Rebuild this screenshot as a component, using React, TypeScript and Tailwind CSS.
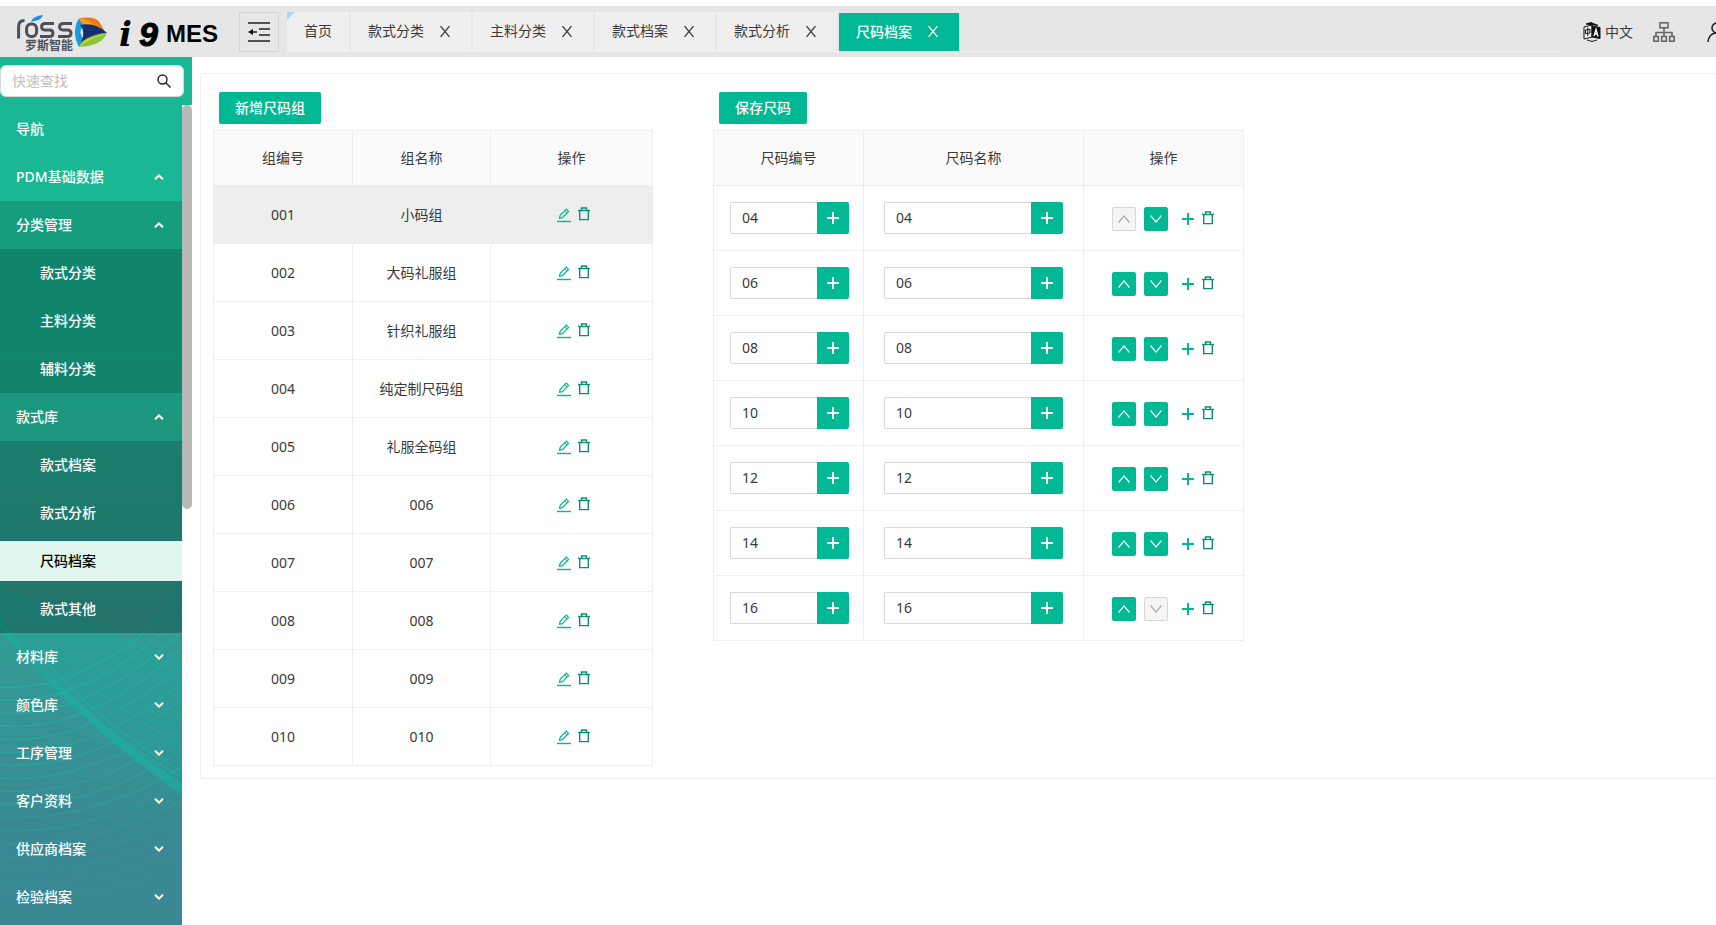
import React from 'react';

interface SubMenu {
  title: string;
  children: string[];
}

const tabs = ['款式分类', '主料分类', '款式档案', '款式分析', '尺码档案'];
const activePage = '尺码档案';

const subMenus: SubMenu[] = [
  { title: '分类管理', children: ['款式分类', '主料分类', '辅料分类'] },
  { title: '款式库', children: ['款式档案', '款式分析', '尺码档案', '款式其他'] },
];

const closedMenus = ['材料库', '颜色库', '工序管理', '客户资料', '供应商档案', '检验档案'];

const groups = [
  { code: '001', name: '小码组' },
  { code: '002', name: '大码礼服组' },
  { code: '003', name: '针织礼服组' },
  { code: '004', name: '纯定制尺码组' },
  { code: '005', name: '礼服全码组' },
  { code: '006', name: '006' },
  { code: '007', name: '007' },
  { code: '008', name: '008' },
  { code: '009', name: '009' },
  { code: '010', name: '010' },
];

const sizes = ['04', '06', '08', '10', '12', '14', '16'];

const curves = Array.from({ length: 17 }, (_, i) => i);

const EditIcon = () => (
  <svg width="14" height="16" viewBox="0 0 14 16" fill="none" stroke="#00b894">
    <path d="M2.5 11.2 3.2 8.4 9.3 2.2 11.6 4.5 5.4 10.6Z" strokeWidth="1.2" />
    <path d="M7.8 3.7 10.1 6" />
    <path d="M0 14.500H14" strokeWidth="1.4" />
  </svg>
);

const TrashIcon = () => (
  <svg width="12" height="16" viewBox="0 0 12 16" fill="none" stroke="#0b8f73" strokeWidth="1.4">
    <path d="M0 3.5H12" />
    <path d="M3.5 3.2V1H8.5V3.2" />
    <path d="M1.7 3.5V12.6H10.3V3.5" />
  </svg>
);

const PlusIcon = ({ size = 12 }: { size?: number }) => (
  <svg width={size} height={size} viewBox="0 0 12 12" fill="none" stroke="currentColor" strokeWidth="2">
    <path d="M6 0V12M0 6H12" />
  </svg>
);

const Arrow = ({ up }: { up?: boolean }) => (
  <svg width="12" height="8" viewBox="0 0 12 8" fill="none" stroke="currentColor" strokeWidth="1.2">
    <path d={up ? 'M.6 7.5 6 .9 11.4 7.5' : 'M.6 .5 6 7.1 11.4 .5'} />
  </svg>
);

const Chevron = ({ open }: { open?: boolean }) => (
  <svg width="10" height="6" viewBox="0 0 10 6" fill="none" stroke="white" strokeWidth="2">
    <path d={open ? 'M1 5.2 5 1.4 9 5.2' : 'M1 .8 5 4.6 9 .8'} />
  </svg>
);

const Logo = () => (
  <svg width="212" height="50" viewBox="0 -5 212 50" className="overflow-visible" role="img" aria-label="ROSS i9 MES">
    <g fill="none" stroke="#4d4f59" strokeWidth="3">
      <path d="M2.600 26.500V14.500Q2.600 8.500 8.500 8.500" />
      <rect x="10.600" y="12" width="10" height="12.500" rx="4.500" />
      <path d="M38 11.500H29.500Q25.600 11.500 25.600 14.800T29 18H33.500Q37 18 37 21.300T33.500 24.600H24" />
      <path d="M56 11.500H47.500Q43.600 11.500 43.600 14.800T47 18H51.500Q55 18 55 21.300T51.500 24.600H42" />
    </g>
    <path d="M15 9.500Q17 4 27 3Q26 8.500 15 9.500Z" fill="#1f8fe0" />
    <text x="9" y="38" fontSize="12" fontWeight="700" fill="#4d4f59">罗斯智能</text>
    <path d="M64 6Q80 4 84 11L88 18Q77 10 66 13Q64 10 64 6Z" fill="#f07818" />
    <path d="M64 6Q72 8 88 18Q77 13 66 13Z" fill="#f9a01b" />
    <path d="M63 6Q55 20 63 35Q66 33 68 28Q61 19 68 13Q64 10 63 6Z" fill="#1a9be0" />
    <path d="M64 13Q80 10 91 21Q79 22 65 30Q70 20 64 13Z" fill="#14306e" />
    <path d="M63 35Q66 28 74 25Q83 21 91 21Q86 34 63 35Z" fill="#8cc63f" />
    <path d="M63 35Q70 28 91 21Q83 23 72 27Q66 30 63 35Z" fill="#e4d829" />
    <text x="103" y="34" fontSize="34" fontWeight="700" fontStyle="italic" fontFamily="DejaVu Serif, serif">i</text>
    <text x="123" y="34" fontSize="34" fontWeight="700" fontStyle="italic" fontFamily="Liberation Sans, sans-serif" stroke="#000">9</text>
    <text x="150" y="30" fontSize="24" fontWeight="700" fontFamily="Liberation Sans, sans-serif">MES</text>
  </svg>
);

const Header = () => (
  <header className="mt-1.5 flex h-[51px] items-center bg-[#e6e6e6]">
    <div className="w-[239px] shrink-0 pl-4">
      <Logo />
    </div>
    <button aria-label="收起菜单" className="flex h-10 w-10 shrink-0 items-center justify-center border border-[#d4d4d4]">
      <svg width="22" height="20" viewBox="0 0 22 20" fill="none" stroke="#222" strokeWidth="1.500">
        <path d="M0 1H22M11 7H22M11 13H22M0 19H22" />
        <path d="M0 10 5 7V13Z" fill="#111" stroke="none" />
        <path d="M4 10H9" />
      </svg>
    </button>
    <nav className="ml-2 flex h-10 flex-1 gap-0.5 border-b border-[#f0f0f0]">
      <a href="#home" className="relative flex items-center bg-[#efefef] px-[17px]">
        <span className="absolute top-0 left-0 border-t-8 border-r-8 border-t-[#add8e6] border-r-transparent" />
        首页
      </a>
      {tabs.map((tab) => (
        <div
          key={tab}
          className={`flex items-center gap-4 pr-[21px] pl-[17px] ${
            tab === activePage ? 'mt-px bg-[#00b894] font-medium text-white' : 'bg-[#efefef]'
          }`}
        >
          <a href={`#${tab}`}>{tab}</a>
          <button aria-label={`关闭${tab}`}>
            <svg width="10" height="11" viewBox="0 0 10 11" fill="none" stroke="currentColor" strokeWidth="1.2">
              <path d="M.5 0 9.500 11M9.500 0 .5 11" />
            </svg>
          </button>
        </div>
      ))}
    </nav>
    <div className="ml-5 flex w-[133px] shrink-0 items-center overflow-hidden">
      <button className="flex shrink-0 items-center gap-1 whitespace-nowrap">
        <svg width="18" height="20" viewBox="0 0 18 20" fill="none" stroke="#111">
          <path d="M1 5 9 3V15L1 17Z" fill="#f4f4f4" />
          <path d="M9 4 17 5.500V16.500L9 15Z" fill="#111" />
          <path d="M3 2 8 .6 15 3.500Z" fill="#111" />
          <path d="M2.500 8 7 7.200V11L2.500 11.600ZM4.800 5.500V14" />
          <path d="M11 14 13 7.500 15 14.500M11.500 12H14.500" stroke="white" strokeWidth="1.400" />
          <path d="M4 18Q9 21 14 18" />
        </svg>
        中文
      </button>
      <button aria-label="组织架构" className="ml-5 shrink-0">
        <svg width="22" height="20" viewBox="0 0 22 20" fill="none" stroke="#666" strokeWidth="1.600">
          <rect x="7" y=".8" width="8" height="5" />
          <rect x=".8" y="14.500" width="4.600" height="4.700" />
          <rect x="8.700" y="14.500" width="4.600" height="4.700" />
          <rect x="16.600" y="14.500" width="4.600" height="4.700" />
          <path d="M11 6V14.500M3 14.500V10.500H19V14.500" />
        </svg>
      </button>
      <button aria-label="用户" className="ml-8 shrink-0">
        <svg width="20" height="20" viewBox="0 0 20 20" fill="none" stroke="#222" strokeWidth="1.600">
          <circle cx="10" cy="6" r="5" />
          <path d="M1 20Q2 11 10 11T19 20" />
        </svg>
      </button>
    </div>
  </header>
);

const Waves = () => (
  <svg className="absolute bottom-0 left-0 h-[400px] w-full" viewBox="0 0 182 400" preserveAspectRatio="none" fill="none" aria-hidden="true">
    <g stroke="#20b8ac" strokeWidth="1.500">
      {curves.map((i) => (
        <path key={i} strokeOpacity={0.6 - i * 0.03} d={`M0 ${162 + i * 13}Q90 ${168 + i * 13} 182 ${72 + i * 17}`} />
      ))}
    </g>
    <path d="M0 60Q70 95 182 132V262Q70 200 0 105Z" fill="#12b3a4" fillOpacity="0.22" />
    <path d="M0 92Q60 185 182 270V258Q80 190 0 104Z" fill="#14b8a8" fillOpacity="0.5" />
    <path d="M40 130Q100 200 182 246M30 130Q100 208 182 252" stroke="#20c0b2" strokeOpacity="0.5" />
  </svg>
);

const Sidebar = () => (
  <aside className="w-48 shrink-0 text-white">
    <div className="h-12 bg-[#19b793] pt-2 pr-2">
      <div className="flex h-8 items-center rounded-md border border-[#d9d9d9] bg-white pr-3 pl-[11px]">
        <input
          aria-label="快速查找"
          placeholder="快速查找"
          className="min-w-0 flex-1 text-[#333] outline-none placeholder:text-[#bfbfbf]"
        />
        <button aria-label="查找">
          <svg width="14" height="14" viewBox="0 0 14 14" fill="none" stroke="#222" strokeWidth="1.400">
            <circle cx="5.500" cy="5.500" r="4.500" />
            <path d="M8.800 8.800 13.500 13.500" />
          </svg>
        </button>
      </div>
    </div>
    <div className="flex">
      <nav className="relative flex-1 overflow-hidden bg-linear-to-b from-[#19b793] from-30% to-[#3a8893] to-90% pb-1 font-medium">
        <Waves />
        <div className="relative">
          <div className="flex h-12 items-center px-4">导航</div>
          <button className="flex h-12 w-full items-center justify-between pr-[18px] pl-4">
            PDM基础数据
            <Chevron open />
          </button>
          {subMenus.map((menu) => (
            <div key={menu.title} className="bg-black/14">
              <button className="flex h-12 w-full items-center justify-between pr-[18px] pl-4">
                {menu.title}
                <Chevron open />
              </button>
              <div className="bg-black/15">
                {menu.children.map((child) => (
                  <div key={child} className="flex h-12 items-center">
                    <a
                      href={`#${child}`}
                      className={`flex h-10 flex-1 items-center pl-10 ${
                        child === activePage ? 'bg-[#e0f6ee] text-black' : ''
                      }`}
                    >
                      {child}
                    </a>
                  </div>
                ))}
              </div>
            </div>
          ))}
          {closedMenus.map((label) => (
            <button key={label} className="flex h-12 w-full items-center justify-between pr-[18px] pl-4">
              {label}
              <Chevron />
            </button>
          ))}
        </div>
      </nav>
      <div className="w-2.5">
        <div className="h-[404px] rounded-full bg-[#b8b8b8]" />
      </div>
    </div>
  </aside>
);

const GroupTable = () => (
  <section>
    <button className="ml-1.5 h-8 rounded-xs bg-[#00b894] px-4 font-medium text-white">新增尺码组</button>
    <table className="mt-1.5 w-[440px] table-fixed border-collapse text-center">
      <colgroup>
        <col className="w-[139px]" />
        <col className="w-[138px]" />
        <col />
      </colgroup>
      <thead>
        <tr className="h-[55px] bg-[#fafafa]">
          <th className="border border-[#eee] font-normal">组编号</th>
          <th className="border border-[#eee] font-normal">组名称</th>
          <th className="border border-[#eee] font-normal">操作</th>
        </tr>
      </thead>
      <tbody>
        {groups.map((group, i) => (
          <tr key={group.code} className={`h-[58px] ${i === 0 ? 'bg-[#eee]' : ''}`}>
            <td className="border border-[#eee]">{group.code}</td>
            <td className="border border-[#eee]">{group.name}</td>
            <td className="border border-[#eee] pl-1">
              <div className="flex items-center justify-center gap-[7px]">
                <button aria-label="编辑">
                  <EditIcon />
                </button>
                <button aria-label="删除">
                  <TrashIcon />
                </button>
              </div>
            </td>
          </tr>
        ))}
      </tbody>
    </table>
  </section>
);

const SizeField = ({ label, value }: { label: string; value: string }) => (
  <div className="flex h-8">
    <input
      aria-label={label}
      defaultValue={value}
      className="min-w-0 flex-1 rounded-l-xs border border-r-0 border-[#d9d9d9] px-[11px] outline-none"
    />
    <button aria-label={`添加${label}`} className="flex w-8 items-center justify-center rounded-r-xs bg-[#00b894] text-white">
      <PlusIcon />
    </button>
  </div>
);

const MoveButton = ({ up, disabled }: { up?: boolean; disabled?: boolean }) => (
  <button
    aria-label={up ? '上移' : '下移'}
    disabled={disabled}
    className={`flex h-6 w-6 items-center justify-center rounded-xs border ${
      disabled ? 'border-[#d9d9d9] bg-[#f5f5f5] text-[#aaa]' : 'border-[#00b894] bg-[#00b894] text-white'
    }`}
  >
    <Arrow up={up} />
  </button>
);

const SizeTable = () => (
  <section>
    <button className="ml-1.5 h-8 rounded-xs bg-[#00b894] px-4 font-medium text-white">保存尺码</button>
    <table className="mt-1.5 w-[531px] table-fixed border-collapse text-center">
      <colgroup>
        <col className="w-[150px]" />
        <col className="w-[220px]" />
        <col />
      </colgroup>
      <thead>
        <tr className="h-[55px] bg-[#fafafa]">
          <th className="border border-[#eee] font-normal">尺码编号</th>
          <th className="border border-[#eee] font-normal">尺码名称</th>
          <th className="border border-[#eee] font-normal">操作</th>
        </tr>
      </thead>
      <tbody>
        {sizes.map((size, i) => (
          <tr key={size} className="h-[65px]">
            <td className="border border-[#eee] pr-3.5 pl-4">
              <SizeField label="尺码编号" value={size} />
            </td>
            <td className="border border-[#eee] px-5">
              <SizeField label="尺码名称" value={size} />
            </td>
            <td className="border border-[#eee] pt-0.5 pr-0.5">
              <div className="flex items-center justify-center gap-2">
                <MoveButton up disabled={i === 0} />
                <MoveButton disabled={i === sizes.length - 1} />
                <button aria-label="插入" className="ml-1.5 text-[#00b894]">
                  <PlusIcon />
                </button>
                <button aria-label="删除">
                  <TrashIcon />
                </button>
              </div>
            </td>
          </tr>
        ))}
      </tbody>
    </table>
  </section>
);

const App = () => {
  return (
    <div className="min-h-screen overflow-hidden bg-white font-['Noto_Sans','Noto_Sans_CJK_SC',sans-serif] text-sm text-[#3a3a3a]">
      <Header />
      <div className="flex items-start">
        <Sidebar />
        <main className="mt-4 ml-2 flex flex-1 gap-[60px] rounded-l-xs border border-r-0 border-[#eee] px-3 pt-[18px] pb-3">
          <GroupTable />
          <SizeTable />
        </main>
      </div>
    </div>
  );
};

export default App;
